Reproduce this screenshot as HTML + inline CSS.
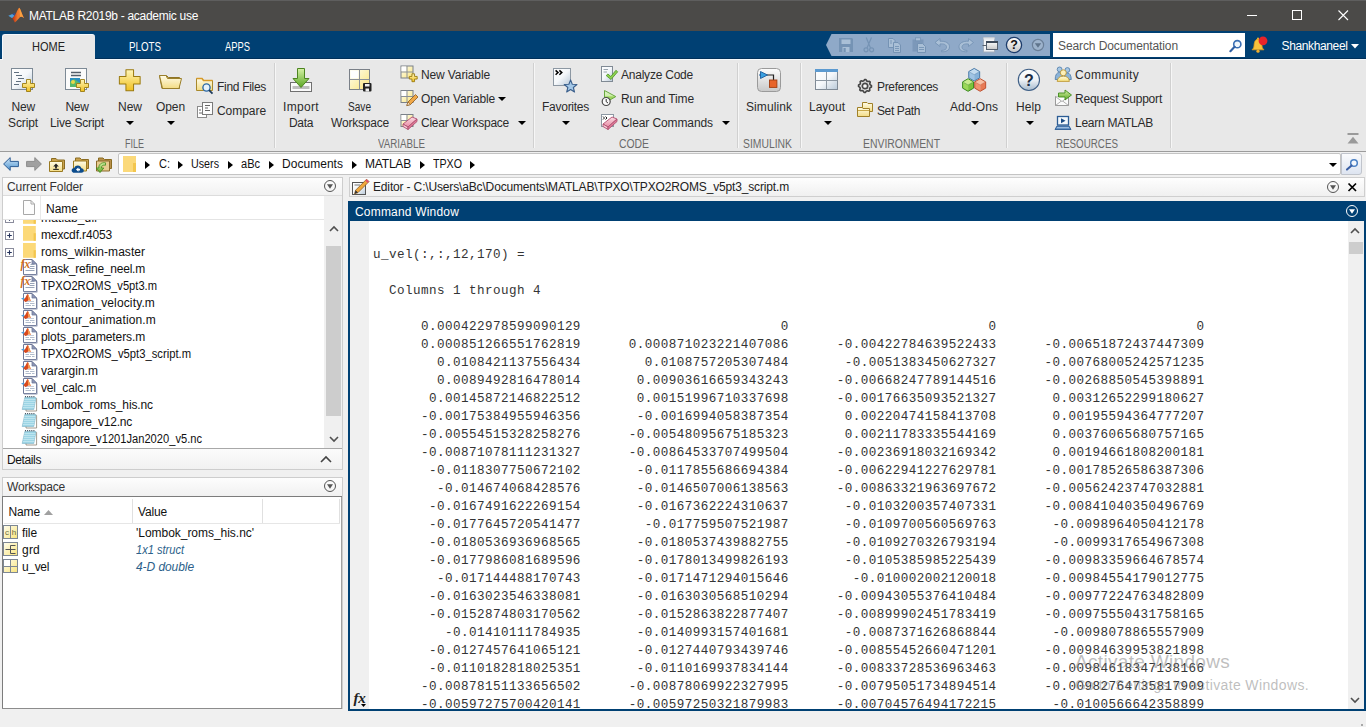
<!DOCTYPE html>
<html><head><meta charset="utf-8"><title>MATLAB R2019b - academic use</title>
<style>
html,body{margin:0;padding:0;}
body{width:1366px;height:727px;position:relative;overflow:hidden;background:#f0f0f0;font-family:"Liberation Sans",sans-serif;}
.b{position:absolute;display:block;}
.t{position:absolute;display:block;white-space:pre;line-height:20px;height:20px;font-size:12px;}
.m{position:absolute;display:block;white-space:pre;font-family:"Liberation Mono",monospace;font-size:12.6px;letter-spacing:0.4375px;line-height:18px;height:18px;color:#343434;}
</style></head><body>
<div class="b" style="left:0px;top:0px;width:1366px;height:31px;background:#4b4a48;"></div>
<div class="b" style="left:0px;top:0px;width:1366px;height:1px;background:#5e5e5e;"></div>
<div class="b" style="left:0px;top:31px;width:1366px;height:28px;background:#004073;"></div>
<div class="b" style="left:0px;top:58px;width:1366px;height:1px;background:#00305a;"></div>
<div class="b" style="left:0px;top:59px;width:1366px;height:92px;background:#e8e8e8;"></div>
<div class="b" style="left:0px;top:59px;width:1366px;height:1px;background:#f4f8fc;"></div>
<div class="b" style="left:0px;top:151px;width:1366px;height:1px;background:#9c9c9c;"></div>
<div class="b" style="left:0px;top:152px;width:1366px;height:25px;background:#f0f0f0;"></div>
<span class="t" style="left:29px;top:6px;color:#ffffff;font-size:12px;letter-spacing:-0.292px;">MATLAB R2019b - academic use</span>
<svg class="b" style="left:1247px;top:10px" width="12" height="12" viewBox="0 0 12 12"><path d="M0 5.5H10" stroke="#fff" stroke-width="1" fill="none"/></svg>
<svg class="b" style="left:1292px;top:10px" width="12" height="12" viewBox="0 0 12 12"><rect x="0.5" y="0.5" width="9" height="9" stroke="#fff" stroke-width="1" fill="none"/></svg>
<svg class="b" style="left:1338px;top:10px" width="12" height="12" viewBox="0 0 12 12"><path d="M0.5 0.5L10 10M10 0.5L0.5 10" stroke="#fff" stroke-width="1.1" fill="none"/></svg>
<div class="b" style="left:2px;top:34px;width:93px;height:26px;background:#e8e8e8;border-radius:3px 3px 0 0;border-top:1px solid #f4f8fc;border-left:1px solid #f4f8fc;box-sizing:border-box;"></div>
<span class="t" style="left:32px;top:37px;color:#222;font-size:12px;transform:scaleX(0.9167);transform-origin:0 50%;">HOME</span>
<span class="t" style="left:129px;top:37px;color:#fff;font-size:12px;transform:scaleX(0.8133);transform-origin:0 50%;">PLOTS</span>
<span class="t" style="left:225px;top:37px;color:#fff;font-size:12px;transform:scaleX(0.7808);transform-origin:0 50%;">APPS</span>
<svg class="b" style="left:826px;top:34px" width="224" height="22" viewBox="0 0 224 22"><path d="M5.5 0H224V22H5.5L0 11Z" fill="#8fa9c8"/></svg>
<div class="b" style="left:1053px;top:33px;width:192px;height:23.6px;background:#ffffff;"></div>
<span class="t" style="left:1058px;top:36px;color:#555;font-size:12px;letter-spacing:-0.103px;">Search Documentation</span>
<span class="t" style="left:1281.5px;top:36px;color:#ffffff;font-size:12px;letter-spacing:-0.369px;">Shankhaneel</span>
<svg class="b" style="left:1351.0px;top:44.25px" width="8" height="4.5" viewBox="0 0 8 4.5"><path d="M0 0H8L4.0 4.5Z" fill="#fff"/></svg>
<div class="b" style="left:274px;top:63px;width:1px;height:85px;background:#d0d0d0;"></div>
<div class="b" style="left:275px;top:63px;width:1px;height:85px;background:#f6f6f6;"></div>
<div class="b" style="left:533px;top:63px;width:1px;height:85px;background:#d0d0d0;"></div>
<div class="b" style="left:534px;top:63px;width:1px;height:85px;background:#f6f6f6;"></div>
<div class="b" style="left:737px;top:63px;width:1px;height:85px;background:#d0d0d0;"></div>
<div class="b" style="left:738px;top:63px;width:1px;height:85px;background:#f6f6f6;"></div>
<div class="b" style="left:800px;top:63px;width:1px;height:85px;background:#d0d0d0;"></div>
<div class="b" style="left:801px;top:63px;width:1px;height:85px;background:#f6f6f6;"></div>
<div class="b" style="left:1006px;top:63px;width:1px;height:85px;background:#d0d0d0;"></div>
<div class="b" style="left:1007px;top:63px;width:1px;height:85px;background:#f6f6f6;"></div>
<div class="b" style="left:1170px;top:63px;width:1px;height:85px;background:#d0d0d0;"></div>
<div class="b" style="left:1171px;top:63px;width:1px;height:85px;background:#f6f6f6;"></div>
<svg class="b" width="0" height="0" style="left:0;top:0"><defs>
<linearGradient id="gY" x1="0" y1="0" x2="0" y2="1"><stop offset="0" stop-color="#fff6b8"/><stop offset="1" stop-color="#f0c020"/></linearGradient>
<linearGradient id="gYl" x1="0" y1="0" x2="0" y2="1"><stop offset="0" stop-color="#fffbe0"/><stop offset="1" stop-color="#f7e07a"/></linearGradient>
<linearGradient id="gYd" x1="0" y1="0" x2="1" y2="1"><stop offset="0" stop-color="#fffef2"/><stop offset="1" stop-color="#f9e47c"/></linearGradient>
<linearGradient id="gPg" x1="0" y1="0" x2="1" y2="1"><stop offset="0" stop-color="#ffffff"/><stop offset="0.5" stop-color="#f4f7fa"/><stop offset="1" stop-color="#b9c9d8"/></linearGradient>
<linearGradient id="gGr" x1="0" y1="0" x2="0" y2="1"><stop offset="0" stop-color="#d6f2a6"/><stop offset="1" stop-color="#5aa622"/></linearGradient>
<linearGradient id="gRt" x1="0" y1="0" x2="0" y2="1"><stop offset="0" stop-color="#e0f4cc"/><stop offset="0.45" stop-color="#cdeea8"/><stop offset="0.5" stop-color="#98d458"/><stop offset="1" stop-color="#b4e080"/></linearGradient>
<linearGradient id="gBl" x1="0" y1="0" x2="0" y2="1"><stop offset="0" stop-color="#cfe6f8"/><stop offset="1" stop-color="#4f94cf"/></linearGradient>
<linearGradient id="gGy" x1="0" y1="0" x2="0" y2="1"><stop offset="0" stop-color="#fdfdfd"/><stop offset="1" stop-color="#c8c8c8"/></linearGradient>
<linearGradient id="gPk" x1="0" y1="0" x2="0" y2="1"><stop offset="0" stop-color="#fbdce4"/><stop offset="1" stop-color="#e88aa4"/></linearGradient>
<linearGradient id="gHp" x1="0" y1="0" x2="0" y2="1"><stop offset="0" stop-color="#ffffff"/><stop offset="0.5" stop-color="#eef2f6"/><stop offset="1" stop-color="#a4b8cc"/></linearGradient>
<linearGradient id="gFo" x1="0" y1="0" x2="0" y2="1"><stop offset="0" stop-color="#fffce8"/><stop offset="1" stop-color="#f3dc84"/></linearGradient>
<linearGradient id="gLogo" x1="0" y1="0" x2="1" y2="0"><stop offset="0" stop-color="#b5260f"/><stop offset="0.5" stop-color="#f08030"/><stop offset="1" stop-color="#d84a18"/></linearGradient>
</defs></svg>
<svg class="b" style="left:10px;top:67px" width="26" height="26" viewBox="0 0 26 26"><rect x="1.5" y="1.5" width="21" height="21" fill="url(#gPg)" stroke="#7d8a96"/><path d="M4 5.5H9M6 8.5H12M8 11.5H14M6 14.5H11M4 17.5H9" stroke="#5f6f7f" stroke-width="1"/><path transform="translate(12 12) scale(1.0)" d="M4.5 0.5H8.5V4.5H12.5V8.5H8.5V12.5H4.5V8.5H0.5V4.5H4.5Z" fill="url(#gY)" stroke="#9a7a10" stroke-width="0.90" stroke-linejoin="round"/></svg>
<svg class="b" style="left:64px;top:67px" width="26" height="26" viewBox="0 0 26 26"><rect x="1.5" y="1.5" width="21" height="21" fill="#fbfbfb" stroke="#7d8a96"/><path d="M7 5.5H17M7 8.5H17" stroke="#555f6a" stroke-width="1.3"/><rect x="6" y="11" width="10" height="9" fill="#2a8fc0"/><path d="M6 20V15L10 12L16 16V20Z" fill="#58b86a"/><circle cx="9" cy="15" r="2" fill="#e8d84a"/><path transform="translate(12 12) scale(1.0)" d="M4.5 0.5H8.5V4.5H12.5V8.5H8.5V12.5H4.5V8.5H0.5V4.5H4.5Z" fill="url(#gY)" stroke="#9a7a10" stroke-width="0.90" stroke-linejoin="round"/></svg>
<svg class="b" style="left:117px;top:68px" width="26" height="24" viewBox="0 0 26 24"><path transform="translate(1.5 1) scale(1.7307692307692308)" d="M4.3 0.5H8.7V4.3H12.5V8.7H8.7V12.5H4.3V8.7H0.5V4.3H4.3Z" fill="url(#gY)" stroke="#9a7a10" stroke-width="0.58" stroke-linejoin="round"/></svg>
<svg class="b" style="left:158px;top:72px" width="26" height="20" viewBox="0 0 26 20"><path d="M1.5 3.5H8.5L10.5 5.5H21.5V16.5H4Z" fill="#d9b95a" stroke="#8f7426" stroke-linejoin="round"/><path d="M1.5 3.5L4.5 16.5H21L23.5 6.5H9.5L8 3.5Z" fill="url(#gFo)" stroke="#9a7f2a" stroke-linejoin="round"/></svg>
<svg class="b" style="left:195px;top:76px" width="22" height="20" viewBox="0 0 22 20"><path d="M1.5 2.5H7L8.5 4.5H17.5V14.5H1.5Z" fill="url(#gFo)" stroke="#a8892c" stroke-linejoin="round"/><path d="M1.5 2.5H7L8.5 4.5H17.5" fill="none" stroke="#d79a28" stroke-width="1.6"/><circle cx="11.5" cy="11.5" r="3.6" fill="#e6f2fb" stroke="#2c6aa8" stroke-width="1.4"/><path d="M14 14.2L17.5 17.6" stroke="#1c3a5c" stroke-width="1.8"/></svg>
<svg class="b" style="left:196px;top:101px" width="20" height="18" viewBox="0 0 20 18"><rect x="1.5" y="5.5" width="9" height="11" fill="#fff" stroke="#8a8a8a"/><rect x="6.5" y="1.5" width="10" height="12" fill="#fcfcfc" stroke="#7a7a7a"/><path d="M9 4.5H14M9 7H12M9 9.5H14M3 9H5M3 12H6" stroke="#666" stroke-width="1"/></svg>
<svg class="b" style="left:289px;top:67px" width="26" height="26" viewBox="0 0 26 26"><rect x="1.5" y="15.5" width="21" height="9" fill="#fafafa" stroke="#707070"/><rect x="3.5" y="19" width="17" height="3" fill="#bdbdbd"/><path d="M8.5 1.5H15.5V11.5H20L12 20.5L4 11.5H8.5Z" fill="url(#gGr)" stroke="#4c8420" stroke-linejoin="round"/></svg>
<svg class="b" style="left:348px;top:68px" width="26" height="26" viewBox="0 0 26 26"><rect x="1.5" y="1.5" width="20" height="20" fill="url(#gYd)" stroke="#7a8088"/><rect x="2.5" y="2.5" width="8" height="8" fill="#fff"/><path d="M11.5 1.5V21.5M1.5 11.5H21.5" stroke="#8a9098" stroke-width="1"/><rect x="15" y="15" width="8.5" height="8.5" rx="1" fill="#222"/><rect x="17" y="16" width="4.5" height="2.5" fill="#eee"/><rect x="17.5" y="20.5" width="3.5" height="3" fill="#eee"/></svg>
<svg class="b" style="left:400px;top:65px" width="20" height="18" viewBox="0 0 20 18"><g transform="translate(0.5 0.5)"><rect x="0.5" y="0.5" width="12" height="12" fill="url(#gYd)" stroke="#7a8088"/><rect x="1" y="1" width="5" height="5" fill="#fff"/><path d="M6.5 0.5V12.5M0.5 6.5H12.5" stroke="#8a9098"/></g><path transform="translate(9 8.5) scale(0.6538461538461539)" d="M4.5 0.5H8.5V4.5H12.5V8.5H8.5V12.5H4.5V8.5H0.5V4.5H4.5Z" fill="url(#gY)" stroke="#9a7a10" stroke-width="1.38" stroke-linejoin="round"/></svg>
<svg class="b" style="left:400px;top:89px" width="20" height="18" viewBox="0 0 20 18"><g transform="translate(0.5 1)"><rect x="0.5" y="0.5" width="12" height="12" fill="url(#gYd)" stroke="#7a8088"/><rect x="1" y="1" width="5" height="5" fill="#fff"/><path d="M6.5 0.5V12.5M0.5 6.5H12.5" stroke="#8a9098"/></g><path d="M15.5 5.5L18 8L10.5 15.5L6.8 16.6L8 13Z" fill="#f0a848" stroke="#8a5a20" stroke-width="0.8" stroke-linejoin="round"/><path d="M6.8 16.6L8 13L10.5 15.5Z" fill="#f6e0c0" stroke="#8a5a20" stroke-width="0.6"/></svg>
<svg class="b" style="left:400px;top:113px" width="20" height="18" viewBox="0 0 20 18"><g transform="translate(0.5 1)"><rect x="0.5" y="0.5" width="12" height="12" fill="url(#gYd)" stroke="#7a8088"/><rect x="1" y="1" width="5" height="5" fill="#fff"/><path d="M6.5 0.5V12.5M0.5 6.5H12.5" stroke="#8a9098"/></g><g transform="translate(2.5 3.5)"><path d="M0.5 7.5L9.5 0.5L14.5 2.5L5.5 10.5Z" fill="url(#gPk)" stroke="#b05070" stroke-width="0.9" stroke-linejoin="round"/><path d="M0.5 7.5L5.5 10.5V13L0.5 10Z" fill="#f7c8d4" stroke="#b05070" stroke-width="0.9" stroke-linejoin="round"/><path d="M5.5 10.5L14.5 2.5V5L5.5 13Z" fill="#e07a98" stroke="#b05070" stroke-width="0.9" stroke-linejoin="round"/></g></svg>
<svg class="b" style="left:552px;top:67px" width="28" height="28" viewBox="0 0 28 28"><rect x="1.5" y="1.5" width="17" height="17" fill="url(#gPg)" stroke="#8d98a3"/><path d="M3.6 3.4L6 5.6L3.6 7.8M7.4 3.4L9.8 5.6L7.4 7.8" fill="none" stroke="#000" stroke-width="1.5"/><path d="M18.60 12.90L20.30 17.25L24.97 17.53L21.36 20.50L22.54 25.02L18.60 22.50L14.66 25.02L15.84 20.50L12.23 17.53L16.90 17.25Z" fill="#a4c8e8" stroke="#3a5f8c" stroke-width="1.1" stroke-linejoin="round"/></svg>
<svg class="b" style="left:600px;top:65px" width="20" height="18" viewBox="0 0 20 18"><rect x="1.5" y="1.5" width="11" height="15" fill="url(#gPg)" stroke="#808a94"/><path d="M3.5 4.5H8M3.5 7H7" stroke="#9aa4ae" stroke-width="1"/><path d="M6.2 10.6L7.9 9L10.8 11.5L15.9 5.3L17.7 6.8L11 14.5Z" fill="#8ed04e" stroke="#4a9424" stroke-width="0.8" stroke-linejoin="round"/></svg>
<svg class="b" style="left:600px;top:88px" width="20" height="20" viewBox="0 0 20 20"><path d="M4.5 2.5L15.8 8.6L4.5 15Z" fill="url(#gRt)" stroke="#6aa840" stroke-linejoin="round"/><circle cx="6.2" cy="13.5" r="4" fill="#fafafa" stroke="#484848" stroke-width="1.2"/><path d="M6.2 11V13.7L8 15" fill="none" stroke="#333" stroke-width="1"/></svg>
<svg class="b" style="left:600px;top:113px" width="20" height="18" viewBox="0 0 20 18"><rect x="1.5" y="1.5" width="12" height="12" fill="#fff" stroke="#8d98a3"/><path d="M3 3.5L4.5 5L3 6.5M5.5 3.5L7 5L5.5 6.5" fill="none" stroke="#000" stroke-width="0.9"/><g transform="translate(2.5 3.5)"><path d="M0.5 7.5L9.5 0.5L14.5 2.5L5.5 10.5Z" fill="url(#gPk)" stroke="#b05070" stroke-width="0.9" stroke-linejoin="round"/><path d="M0.5 7.5L5.5 10.5V13L0.5 10Z" fill="#f7c8d4" stroke="#b05070" stroke-width="0.9" stroke-linejoin="round"/><path d="M5.5 10.5L14.5 2.5V5L5.5 13Z" fill="#e07a98" stroke="#b05070" stroke-width="0.9" stroke-linejoin="round"/></g></svg>
<svg class="b" style="left:756px;top:67px" width="26" height="26" viewBox="0 0 26 26"><rect x="1.5" y="1.5" width="23" height="23" rx="4" fill="url(#gGy)" stroke="#9a9a9a"/><path d="M11 8H17.5V13" fill="none" stroke="#222" stroke-width="1.2"/><path d="M4.5 4.5L11.5 8L4.5 11.5Z" fill="#3aa0e0" stroke="#1c5c9c" stroke-width="0.9" stroke-linejoin="round"/><rect x="13.5" y="13" width="7.4" height="7.4" fill="#e8642a" stroke="#a03c10" stroke-width="0.9"/><path d="M3 8H4.5" stroke="#1c5c9c" stroke-width="1"/></svg>
<svg class="b" style="left:814px;top:68px" width="26" height="24" viewBox="0 0 26 24"><rect x="1.5" y="1.5" width="22" height="20" fill="url(#gPg)" stroke="#7f8a95"/><rect x="1" y="1" width="23" height="3" fill="#5c9ad0"/><path d="M12.5 4V21.5M1.5 12.5H23.5" stroke="#8d98a3" stroke-width="1"/></svg>
<svg class="b" style="left:856px;top:77px" width="18" height="18" viewBox="0 0 18 18"><path d="M15.49 8.68L15.43 9.95L13.99 10.79L13.55 11.72L13.82 13.37L12.87 14.22L11.27 13.79L10.29 14.14L9.32 15.49L8.05 15.43L7.21 13.99L6.28 13.55L4.63 13.82L3.78 12.87L4.21 11.27L3.86 10.29L2.51 9.32L2.57 8.05L4.01 7.21L4.45 6.28L4.18 4.63L5.13 3.78L6.73 4.21L7.71 3.86L8.68 2.51L9.95 2.57L10.79 4.01L11.72 4.45L13.37 4.18L14.22 5.13L13.79 6.73L14.14 7.71Z" fill="#e0e0e0" stroke="#444" stroke-width="1.6" stroke-linejoin="round"/><circle cx="9" cy="9" r="2.7" fill="#fafafa" stroke="#484848" stroke-width="1.7"/></svg>
<svg class="b" style="left:856px;top:101px" width="20" height="18" viewBox="0 0 20 18"><path d="M6.5 1.5H11L12 2.5H16.5V10.5H6.5Z" fill="url(#gFo)" stroke="#a08028" stroke-linejoin="round"/><path d="M1.5 6.5H6L7 7.5H13.5V15.5H1.5Z" fill="url(#gFo)" stroke="#a08028" stroke-linejoin="round"/><path d="M2 9.5H13" stroke="#c8a848" stroke-width="1"/></svg>
<svg class="b" style="left:960px;top:66px" width="28" height="28" viewBox="0 0 28 28"><path d="M14.2 2.3999999999999995L19.66 5.549999999999999L14.2 8.7L8.74 5.549999999999999Z" fill="#c4dcf0"/><path d="M8.74 5.549999999999999L14.2 8.7V15.0L8.74 11.85Z" fill="#a0c4e4"/><path d="M19.66 5.549999999999999L14.2 8.7V15.0L19.66 11.85Z" fill="#86b2da"/><path d="M9.74 6.149999999999999L14.2 8.7L18.66 6.149999999999999" fill="none" stroke="#4a7aa8" stroke-width="0.6" opacity="0.7"/><path d="M14.2 2.3999999999999995L19.66 5.549999999999999V11.85L14.2 15.0L8.74 11.85V5.549999999999999Z" fill="none" stroke="#4a7aa8" stroke-width="1" stroke-linejoin="round"/><path d="M8.1 12.7L13.56 15.85L8.1 19.0L2.64 15.85Z" fill="#c8ec8c"/><path d="M2.64 15.85L8.1 19.0V25.3L2.64 22.15Z" fill="#9cd858"/><path d="M13.56 15.85L8.1 19.0V25.3L13.56 22.15Z" fill="#7cc43c"/><path d="M3.64 16.45L8.1 19.0L12.56 16.45" fill="none" stroke="#3a8a20" stroke-width="0.6" opacity="0.7"/><path d="M8.1 12.7L13.56 15.85V22.15L8.1 25.3L2.64 22.15V15.85Z" fill="none" stroke="#3a8a20" stroke-width="1" stroke-linejoin="round"/><path d="M20.2 12.7L25.66 15.85L20.2 19.0L14.74 15.85Z" fill="#f8c0a4"/><path d="M14.74 15.85L20.2 19.0V25.3L14.74 22.15Z" fill="#f09470"/><path d="M25.66 15.85L20.2 19.0V25.3L25.66 22.15Z" fill="#e87a54"/><path d="M15.74 16.45L20.2 19.0L24.66 16.45" fill="none" stroke="#c05030" stroke-width="0.6" opacity="0.7"/><path d="M20.2 12.7L25.66 15.85V22.15L20.2 25.3L14.74 22.15V15.85Z" fill="none" stroke="#c05030" stroke-width="1" stroke-linejoin="round"/></svg>
<svg class="b" style="left:1016px;top:67px" width="26" height="26" viewBox="0 0 26 26"><circle cx="12.9" cy="12.9" r="10.6" fill="url(#gHp)" stroke="#3f5f86" stroke-width="1.1"/><text x="12.9" y="18.6" text-anchor="middle" font-family="Liberation Sans,sans-serif" font-weight="bold" font-size="16" fill="#1c2c44">?</text></svg>
<svg class="b" style="left:1054px;top:66px" width="20" height="18" viewBox="0 0 20 18"><circle cx="5.6" cy="3.4" r="2.4" fill="#a8c8e4" stroke="#4a78a8" stroke-width="0.8"/><circle cx="13.4" cy="4" r="2.4" fill="#a8c8e4" stroke="#4a78a8" stroke-width="0.8"/><path d="M1.2 13.5Q1.2 6.4 5.6 6.4Q8 6.4 8.6 9V13.5Z" fill="#8cb4d8" stroke="#4a78a8" stroke-width="0.8"/><path d="M10 13.5Q10.5 7 13.4 7Q17 7 17.3 13.5Z" fill="#8cb4d8" stroke="#4a78a8" stroke-width="0.8"/><circle cx="9.3" cy="6.8" r="3" fill="#fdf0b8" stroke="#b8902c" stroke-width="0.8"/><path d="M3.2 15.4Q3.6 10.2 9.3 10.2Q15 10.2 15.4 15.4Z" fill="url(#gYl)" stroke="#b8902c" stroke-width="0.8"/></svg>
<svg class="b" style="left:1054px;top:89px" width="20" height="20" viewBox="0 0 20 20"><rect x="1.5" y="7.5" width="13" height="9" fill="#fbfbfb" stroke="#9a9a9a"/><path d="M1.5 16.5L8 11.5L14.5 16.5" fill="none" stroke="#b0b0b0"/><path d="M1.5 7.5L8 12.5L14.5 7.5" fill="#fff" stroke="#b0b0b0"/><path d="M4.5 4H11V1L17.5 6L11 11V8H4.5Z" fill="url(#gGr)" stroke="#3f8a1c" stroke-width="0.9" stroke-linejoin="round"/></svg>
<svg class="b" style="left:1054px;top:115px" width="20" height="16" viewBox="0 0 20 16"><rect x="3.5" y="1.5" width="11" height="8.5" fill="#f4f8fc" stroke="#2c5c94" stroke-width="1.3"/><path d="M7 3.3L11.5 5.8L7 8.3Z" fill="#1c4c84"/><path d="M3 11L1 14.5H17L15 11Z" fill="#5c8cc0" stroke="#2c5c94" stroke-width="0.9" stroke-linejoin="round"/><path d="M3 12.7H15" stroke="#cfe0f0" stroke-width="0.7"/></svg>
<span class="t" style="left:11.5px;top:97px;color:#2b2b2b;font-size:12px;letter-spacing:-0.169px;">New</span>
<span class="t" style="left:8px;top:113px;color:#2b2b2b;font-size:12px;letter-spacing:-0.112px;">Script</span>
<span class="t" style="left:65.5px;top:97px;color:#2b2b2b;font-size:12px;letter-spacing:-0.335px;">New</span>
<span class="t" style="left:50px;top:113px;color:#2b2b2b;font-size:12px;letter-spacing:-0.184px;">Live Script</span>
<span class="t" style="left:118px;top:97px;color:#2b2b2b;font-size:12px;letter-spacing:-0.002px;">New</span>
<svg class="b" style="left:126.0px;top:120.6px" width="8" height="4" viewBox="0 0 8 4"><path d="M0 0H8L4.0 4Z" fill="#000"/></svg>
<span class="t" style="left:156px;top:97px;color:#2b2b2b;font-size:12px;letter-spacing:-0.088px;">Open</span>
<svg class="b" style="left:166.5px;top:120.6px" width="8" height="4" viewBox="0 0 8 4"><path d="M0 0H8L4.0 4Z" fill="#000"/></svg>
<span class="t" style="left:217px;top:77px;color:#2b2b2b;font-size:12px;letter-spacing:-0.301px;">Find Files</span>
<span class="t" style="left:217px;top:101px;color:#2b2b2b;font-size:12px;letter-spacing:-0.050px;">Compare</span>
<span class="t" style="left:125px;top:133.6px;color:#6a6a6a;font-size:12px;transform:scaleX(0.7498);transform-origin:0 50%;">FILE</span>
<span class="t" style="left:283px;top:97px;color:#2b2b2b;font-size:12px;letter-spacing:0.332px;">Import</span>
<span class="t" style="left:289px;top:113px;color:#2b2b2b;font-size:12px;letter-spacing:-0.337px;">Data</span>
<span class="t" style="left:348px;top:97px;color:#2b2b2b;font-size:12px;transform:scaleX(0.8409);transform-origin:0 50%;">Save</span>
<span class="t" style="left:331px;top:113px;color:#2b2b2b;font-size:12px;letter-spacing:-0.200px;">Workspace</span>
<span class="t" style="left:421px;top:65px;color:#2b2b2b;font-size:12px;letter-spacing:-0.123px;">New Variable</span>
<span class="t" style="left:421px;top:89px;color:#2b2b2b;font-size:12px;letter-spacing:-0.140px;">Open Variable</span>
<svg class="b" style="left:497.5px;top:96.6px" width="8" height="4" viewBox="0 0 8 4"><path d="M0 0H8L4.0 4Z" fill="#000"/></svg>
<span class="t" style="left:421px;top:113px;color:#2b2b2b;font-size:12px;letter-spacing:-0.254px;">Clear Workspace</span>
<svg class="b" style="left:517.5px;top:120.6px" width="8" height="4" viewBox="0 0 8 4"><path d="M0 0H8L4.0 4Z" fill="#000"/></svg>
<span class="t" style="left:378px;top:133.6px;color:#6a6a6a;font-size:12px;transform:scaleX(0.8131);transform-origin:0 50%;">VARIABLE</span>
<span class="t" style="left:542px;top:97px;color:#2b2b2b;font-size:12px;letter-spacing:-0.260px;">Favorites</span>
<svg class="b" style="left:561.5px;top:120.6px" width="8" height="4" viewBox="0 0 8 4"><path d="M0 0H8L4.0 4Z" fill="#000"/></svg>
<span class="t" style="left:621px;top:65px;color:#2b2b2b;font-size:12px;letter-spacing:-0.226px;">Analyze Code</span>
<span class="t" style="left:621px;top:89px;color:#2b2b2b;font-size:12px;letter-spacing:-0.142px;">Run and Time</span>
<span class="t" style="left:621px;top:113px;color:#2b2b2b;font-size:12px;letter-spacing:-0.097px;">Clear Commands</span>
<svg class="b" style="left:721.5px;top:120.6px" width="8" height="4" viewBox="0 0 8 4"><path d="M0 0H8L4.0 4Z" fill="#000"/></svg>
<span class="t" style="left:619px;top:133.6px;color:#6a6a6a;font-size:12px;transform:scaleX(0.8653);transform-origin:0 50%;">CODE</span>
<span class="t" style="left:746px;top:97px;color:#2b2b2b;font-size:12px;letter-spacing:0.082px;">Simulink</span>
<span class="t" style="left:743px;top:133.6px;color:#6a6a6a;font-size:12px;transform:scaleX(0.8645);transform-origin:0 50%;">SIMULINK</span>
<span class="t" style="left:809px;top:97px;color:#2b2b2b;font-size:12px;letter-spacing:-0.004px;">Layout</span>
<svg class="b" style="left:823.5px;top:120.6px" width="8" height="4" viewBox="0 0 8 4"><path d="M0 0H8L4.0 4Z" fill="#000"/></svg>
<span class="t" style="left:877px;top:77px;color:#2b2b2b;font-size:12px;letter-spacing:-0.336px;">Preferences</span>
<span class="t" style="left:877px;top:101px;color:#2b2b2b;font-size:12px;letter-spacing:-0.379px;">Set Path</span>
<span class="t" style="left:863px;top:133.6px;color:#6a6a6a;font-size:12px;transform:scaleX(0.8684);transform-origin:0 50%;">ENVIRONMENT</span>
<span class="t" style="left:950px;top:97px;color:#2b2b2b;font-size:12px;letter-spacing:0.092px;">Add-Ons</span>
<svg class="b" style="left:970.5px;top:120.6px" width="8" height="4" viewBox="0 0 8 4"><path d="M0 0H8L4.0 4Z" fill="#000"/></svg>
<span class="t" style="left:1016px;top:97px;color:#2b2b2b;font-size:12px;letter-spacing:0.080px;">Help</span>
<svg class="b" style="left:1025.5px;top:120.6px" width="8" height="4" viewBox="0 0 8 4"><path d="M0 0H8L4.0 4Z" fill="#000"/></svg>
<span class="t" style="left:1075px;top:65px;color:#2b2b2b;font-size:12px;letter-spacing:0.369px;">Community</span>
<span class="t" style="left:1075px;top:89px;color:#2b2b2b;font-size:12px;letter-spacing:-0.203px;">Request Support</span>
<span class="t" style="left:1075px;top:113px;color:#2b2b2b;font-size:12px;letter-spacing:-0.262px;">Learn MATLAB</span>
<span class="t" style="left:1056px;top:133.6px;color:#6a6a6a;font-size:12px;transform:scaleX(0.8156);transform-origin:0 50%;">RESOURCES</span>
<svg class="b" style="left:1347px;top:133px" width="12" height="11" viewBox="0 0 12 11"><path d="M0.5 1H11.5" stroke="#9a9a9a" stroke-width="2"/><path d="M0.5 10.5H11.5L6 3.8Z" fill="#9a9a9a"/></svg>
<div class="b" style="left:118px;top:153px;width:1223px;height:22px;background:#ffffff;border:1px solid #c4c4c4;box-sizing:border-box;border-radius:2px;"></div>
<div class="b" style="left:1341px;top:153px;width:21px;height:22px;background:linear-gradient(#fafbfd,#dde4f0);border:1px solid #c0c4cc;box-sizing:border-box;border-radius:0 3px 3px 0;"></div>
<div class="b" style="left:123px;top:156px;width:13px;height:16px;background:#fbd97a;"></div>
<div class="b" style="left:133px;top:163px;width:3px;height:9px;background:#f3c64e;"></div>
<svg class="b" style="left:145.0px;top:160.5px" width="5" height="8" viewBox="0 0 5 8"><path d="M0 0V8L5 4.0Z" fill="#000"/></svg>
<svg class="b" style="left:178.0px;top:160.5px" width="5" height="8" viewBox="0 0 5 8"><path d="M0 0V8L5 4.0Z" fill="#000"/></svg>
<svg class="b" style="left:228.0px;top:160.5px" width="5" height="8" viewBox="0 0 5 8"><path d="M0 0V8L5 4.0Z" fill="#000"/></svg>
<svg class="b" style="left:269.0px;top:160.5px" width="5" height="8" viewBox="0 0 5 8"><path d="M0 0V8L5 4.0Z" fill="#000"/></svg>
<svg class="b" style="left:352.0px;top:160.5px" width="5" height="8" viewBox="0 0 5 8"><path d="M0 0V8L5 4.0Z" fill="#000"/></svg>
<svg class="b" style="left:420.0px;top:160.5px" width="5" height="8" viewBox="0 0 5 8"><path d="M0 0V8L5 4.0Z" fill="#000"/></svg>
<svg class="b" style="left:470.0px;top:160.5px" width="5" height="8" viewBox="0 0 5 8"><path d="M0 0V8L5 4.0Z" fill="#000"/></svg>
<span class="t" style="left:159px;top:154px;color:#111;font-size:12px;transform:scaleX(0.9167);transform-origin:0 50%;">C:</span>
<span class="t" style="left:191px;top:154px;color:#111;font-size:12px;transform:scaleX(0.8936);transform-origin:0 50%;">Users</span>
<span class="t" style="left:241px;top:154px;color:#111;font-size:12px;transform:scaleX(0.9189);transform-origin:0 50%;">aBc</span>
<span class="t" style="left:282px;top:154px;color:#111;font-size:12px;letter-spacing:0.035px;">Documents</span>
<span class="t" style="left:365px;top:154px;color:#111;font-size:12px;letter-spacing:-0.187px;">MATLAB</span>
<span class="t" style="left:433px;top:154px;color:#111;font-size:12px;transform:scaleX(0.8876);transform-origin:0 50%;">TPXO</span>
<svg class="b" style="left:1329.0px;top:162.5px" width="8" height="4" viewBox="0 0 8 4"><path d="M0 0H8L4.0 4Z" fill="#000"/></svg>
<div class="b" style="left:2px;top:177px;width:341px;height:272px;background:#ffffff;border:1px solid #cdcdcd;box-sizing:border-box;"></div>
<div class="b" style="left:3px;top:178px;width:339px;height:18px;background:linear-gradient(#fdfdfd,#f1f1f1);"></div>
<div class="b" style="left:3px;top:195px;width:339px;height:1px;background:#dcdcdc;"></div>
<span class="t" style="left:7px;top:177px;color:#333;font-size:12px;letter-spacing:-0.097px;">Current Folder</span>
<div class="b" style="left:3px;top:196px;width:321px;height:23px;background:#ffffff;"></div>
<div class="b" style="left:3px;top:219px;width:321px;height:1px;background:#e4e4e4;"></div>
<div class="b" style="left:40px;top:196px;width:1px;height:23px;background:#e9e9e9;"></div>
<svg class="b" style="left:22px;top:200px" width="14" height="16" viewBox="0 0 14 16"><path d="M1.5 0.5H9L12.5 4V14.5H1.5Z" fill="#fdfdfd" stroke="#a8a8a8"/><path d="M9 0.5V4H12.5" fill="none" stroke="#a8a8a8"/></svg>
<span class="t" style="left:46px;top:199px;color:#111;font-size:12px;letter-spacing:-0.002px;">Name</span>
<div class="b" style="left:324px;top:196px;width:18px;height:252px;background:#f0f0f0;"></div>
<div class="b" style="left:3px;top:448px;width:339px;height:1px;background:#a8a8a8;"></div>
<div class="b" style="left:326px;top:246px;width:15px;height:170px;background:#cdcdcd;"></div>
<div class="b" style="left:3px;top:220px;width:321px;height:229px;overflow:hidden;">
<span class="t" style="left:38px;top:-12px;color:#111;font-size:12px;letter-spacing:0.131px;">matlab_dll</span>
<svg class="b" style="left:17px;top:-12px" width="18" height="17" viewBox="0 0 18 17"><path d="M3 1H15.8V15.8H3Z" fill="#fcd978"/><path d="M13.6 8.2H15.8V15.8H13.6Z" fill="#f3c64e"/></svg>
<svg class="b" style="left:2px;top:-6px" width="9" height="9" viewBox="0 0 9 9"><rect x="0.5" y="0.5" width="8" height="8" fill="#fff" stroke="#8a8c9c"/><path d="M2.2 4.5H6.8M4.5 2.2V6.8" stroke="#22305a" stroke-width="1.1"/></svg>
<span class="t" style="left:38px;top:5px;color:#111;font-size:12px;letter-spacing:-0.141px;">mexcdf.r4053</span>
<svg class="b" style="left:17px;top:5px" width="18" height="17" viewBox="0 0 18 17"><path d="M3 1H15.8V15.8H3Z" fill="#fcd978"/><path d="M13.6 8.2H15.8V15.8H13.6Z" fill="#f3c64e"/></svg>
<svg class="b" style="left:2px;top:11px" width="9" height="9" viewBox="0 0 9 9"><rect x="0.5" y="0.5" width="8" height="8" fill="#fff" stroke="#8a8c9c"/><path d="M2.2 4.5H6.8M4.5 2.2V6.8" stroke="#22305a" stroke-width="1.1"/></svg>
<span class="t" style="left:38px;top:22px;color:#111;font-size:12px;letter-spacing:0.037px;">roms_wilkin-master</span>
<svg class="b" style="left:17px;top:22px" width="18" height="17" viewBox="0 0 18 17"><path d="M3 1H15.8V15.8H3Z" fill="#fcd978"/><path d="M13.6 8.2H15.8V15.8H13.6Z" fill="#f3c64e"/></svg>
<svg class="b" style="left:2px;top:28px" width="9" height="9" viewBox="0 0 9 9"><rect x="0.5" y="0.5" width="8" height="8" fill="#fff" stroke="#8a8c9c"/><path d="M2.2 4.5H6.8M4.5 2.2V6.8" stroke="#22305a" stroke-width="1.1"/></svg>
<span class="t" style="left:38px;top:39px;color:#111;font-size:12px;letter-spacing:-0.225px;">mask_refine_neel.m</span>
<svg class="b" style="left:17px;top:39px" width="18" height="17" viewBox="0 0 18 17"><path d="M3.5 0.5H12L16.5 5V15.5H3.5Z" fill="#fff" stroke="#6e7898" stroke-linejoin="round"/><path d="M12 0.5V5H16.5Z" fill="#8c96b8" stroke="#6e7898" stroke-width="0.8" stroke-linejoin="round"/><path d="M4 16.2H17.2V5.5" fill="none" stroke="#9aa2ba" stroke-width="0.8"/><path d="M9.5 3.5H11M10.5 5.5H14.5M10 7.5H14.5M9.5 9.5H14.5M5.5 11.5H14.5" stroke="#8c9ab0" stroke-width="0.9"/><text x="0.6" y="9.4" font-family="Liberation Serif,serif" font-style="italic" font-weight="bold" font-size="11.5" fill="#d0701c">fx</text></svg>
<span class="t" style="left:38px;top:56px;color:#111;font-size:12px;transform:scaleX(0.9302);transform-origin:0 50%;">TPXO2ROMS_v5pt3.m</span>
<svg class="b" style="left:17px;top:56px" width="18" height="17" viewBox="0 0 18 17"><path d="M3.5 0.5H12L16.5 5V15.5H3.5Z" fill="#fff" stroke="#6e7898" stroke-linejoin="round"/><path d="M12 0.5V5H16.5Z" fill="#8c96b8" stroke="#6e7898" stroke-width="0.8" stroke-linejoin="round"/><path d="M4 16.2H17.2V5.5" fill="none" stroke="#9aa2ba" stroke-width="0.8"/><path d="M9.5 3.5H11M10.5 5.5H14.5M10 7.5H14.5M9.5 9.5H14.5M5.5 11.5H14.5" stroke="#8c9ab0" stroke-width="0.9"/><text x="0.6" y="9.4" font-family="Liberation Serif,serif" font-style="italic" font-weight="bold" font-size="11.5" fill="#d0701c">fx</text></svg>
<span class="t" style="left:38px;top:73px;color:#111;font-size:12px;letter-spacing:0.142px;">animation_velocity.m</span>
<svg class="b" style="left:17px;top:73px" width="18" height="17" viewBox="0 0 18 17"><path d="M3.5 0.5H12L16.5 5V15.5H3.5Z" fill="#fff" stroke="#6e7898" stroke-linejoin="round"/><path d="M12 0.5V5H16.5Z" fill="#8c96b8" stroke="#6e7898" stroke-width="0.8" stroke-linejoin="round"/><path d="M4 16.2H17.2V5.5" fill="none" stroke="#9aa2ba" stroke-width="0.8"/><path d="M5.5 10.5H9M10 10.5H14.5M5.5 12.5H11M12 12.5H14.5" stroke="#a8b4c6" stroke-width="0.9"/><path d="M5 8.5H14" stroke="#b8c0d0" stroke-width="0.8"/><path d="M1 5.6L3.6 4.6L4.8 5.6L3.4 7Z" fill="#4f9fdc"/><path d="M3.4 7L4.8 5.6C6 4 6.8 1.4 7.6 1C8.6 1.6 9.6 5.4 11 8C9.8 7.2 9 7 8.2 7.6C7.2 8.4 6.2 8.8 5.2 9C4.6 8.2 4 7.6 3.4 7Z" fill="#d9481c"/><path d="M7.6 1C8.6 1.6 9.6 5.4 11 8C9.8 7.2 9 7 8.2 7.6C8 5.4 7.8 3 7.6 1Z" fill="#f59a50"/></svg>
<span class="t" style="left:38px;top:90px;color:#111;font-size:12px;letter-spacing:0.155px;">contour_animation.m</span>
<svg class="b" style="left:17px;top:90px" width="18" height="17" viewBox="0 0 18 17"><path d="M3.5 0.5H12L16.5 5V15.5H3.5Z" fill="#fff" stroke="#6e7898" stroke-linejoin="round"/><path d="M12 0.5V5H16.5Z" fill="#8c96b8" stroke="#6e7898" stroke-width="0.8" stroke-linejoin="round"/><path d="M4 16.2H17.2V5.5" fill="none" stroke="#9aa2ba" stroke-width="0.8"/><path d="M5.5 10.5H9M10 10.5H14.5M5.5 12.5H11M12 12.5H14.5" stroke="#a8b4c6" stroke-width="0.9"/><path d="M5 8.5H14" stroke="#b8c0d0" stroke-width="0.8"/><path d="M1 5.6L3.6 4.6L4.8 5.6L3.4 7Z" fill="#4f9fdc"/><path d="M3.4 7L4.8 5.6C6 4 6.8 1.4 7.6 1C8.6 1.6 9.6 5.4 11 8C9.8 7.2 9 7 8.2 7.6C7.2 8.4 6.2 8.8 5.2 9C4.6 8.2 4 7.6 3.4 7Z" fill="#d9481c"/><path d="M7.6 1C8.6 1.6 9.6 5.4 11 8C9.8 7.2 9 7 8.2 7.6C8 5.4 7.8 3 7.6 1Z" fill="#f59a50"/></svg>
<span class="t" style="left:38px;top:107px;color:#111;font-size:12px;letter-spacing:-0.113px;">plots_parameters.m</span>
<svg class="b" style="left:17px;top:107px" width="18" height="17" viewBox="0 0 18 17"><path d="M3.5 0.5H12L16.5 5V15.5H3.5Z" fill="#fff" stroke="#6e7898" stroke-linejoin="round"/><path d="M12 0.5V5H16.5Z" fill="#8c96b8" stroke="#6e7898" stroke-width="0.8" stroke-linejoin="round"/><path d="M4 16.2H17.2V5.5" fill="none" stroke="#9aa2ba" stroke-width="0.8"/><path d="M5.5 10.5H9M10 10.5H14.5M5.5 12.5H11M12 12.5H14.5" stroke="#a8b4c6" stroke-width="0.9"/><path d="M5 8.5H14" stroke="#b8c0d0" stroke-width="0.8"/><path d="M1 5.6L3.6 4.6L4.8 5.6L3.4 7Z" fill="#4f9fdc"/><path d="M3.4 7L4.8 5.6C6 4 6.8 1.4 7.6 1C8.6 1.6 9.6 5.4 11 8C9.8 7.2 9 7 8.2 7.6C7.2 8.4 6.2 8.8 5.2 9C4.6 8.2 4 7.6 3.4 7Z" fill="#d9481c"/><path d="M7.6 1C8.6 1.6 9.6 5.4 11 8C9.8 7.2 9 7 8.2 7.6C8 5.4 7.8 3 7.6 1Z" fill="#f59a50"/></svg>
<span class="t" style="left:38px;top:124px;color:#111;font-size:12px;transform:scaleX(0.9373);transform-origin:0 50%;">TPXO2ROMS_v5pt3_script.m</span>
<svg class="b" style="left:17px;top:124px" width="18" height="17" viewBox="0 0 18 17"><path d="M3.5 0.5H12L16.5 5V15.5H3.5Z" fill="#fff" stroke="#6e7898" stroke-linejoin="round"/><path d="M12 0.5V5H16.5Z" fill="#8c96b8" stroke="#6e7898" stroke-width="0.8" stroke-linejoin="round"/><path d="M4 16.2H17.2V5.5" fill="none" stroke="#9aa2ba" stroke-width="0.8"/><path d="M5.5 10.5H9M10 10.5H14.5M5.5 12.5H11M12 12.5H14.5" stroke="#a8b4c6" stroke-width="0.9"/><path d="M5 8.5H14" stroke="#b8c0d0" stroke-width="0.8"/><path d="M1 5.6L3.6 4.6L4.8 5.6L3.4 7Z" fill="#4f9fdc"/><path d="M3.4 7L4.8 5.6C6 4 6.8 1.4 7.6 1C8.6 1.6 9.6 5.4 11 8C9.8 7.2 9 7 8.2 7.6C7.2 8.4 6.2 8.8 5.2 9C4.6 8.2 4 7.6 3.4 7Z" fill="#d9481c"/><path d="M7.6 1C8.6 1.6 9.6 5.4 11 8C9.8 7.2 9 7 8.2 7.6C8 5.4 7.8 3 7.6 1Z" fill="#f59a50"/></svg>
<span class="t" style="left:38px;top:141px;color:#111;font-size:12px;letter-spacing:0.032px;">varargin.m</span>
<svg class="b" style="left:17px;top:141px" width="18" height="17" viewBox="0 0 18 17"><path d="M3.5 0.5H12L16.5 5V15.5H3.5Z" fill="#fff" stroke="#6e7898" stroke-linejoin="round"/><path d="M12 0.5V5H16.5Z" fill="#8c96b8" stroke="#6e7898" stroke-width="0.8" stroke-linejoin="round"/><path d="M4 16.2H17.2V5.5" fill="none" stroke="#9aa2ba" stroke-width="0.8"/><path d="M5.5 10.5H9M10 10.5H14.5M5.5 12.5H11M12 12.5H14.5" stroke="#a8b4c6" stroke-width="0.9"/><path d="M5 8.5H14" stroke="#b8c0d0" stroke-width="0.8"/><path d="M1 5.6L3.6 4.6L4.8 5.6L3.4 7Z" fill="#4f9fdc"/><path d="M3.4 7L4.8 5.6C6 4 6.8 1.4 7.6 1C8.6 1.6 9.6 5.4 11 8C9.8 7.2 9 7 8.2 7.6C7.2 8.4 6.2 8.8 5.2 9C4.6 8.2 4 7.6 3.4 7Z" fill="#d9481c"/><path d="M7.6 1C8.6 1.6 9.6 5.4 11 8C9.8 7.2 9 7 8.2 7.6C8 5.4 7.8 3 7.6 1Z" fill="#f59a50"/></svg>
<span class="t" style="left:38px;top:158px;color:#111;font-size:12px;letter-spacing:-0.168px;">vel_calc.m</span>
<svg class="b" style="left:17px;top:158px" width="18" height="17" viewBox="0 0 18 17"><path d="M3.5 0.5H12L16.5 5V15.5H3.5Z" fill="#fff" stroke="#6e7898" stroke-linejoin="round"/><path d="M12 0.5V5H16.5Z" fill="#8c96b8" stroke="#6e7898" stroke-width="0.8" stroke-linejoin="round"/><path d="M4 16.2H17.2V5.5" fill="none" stroke="#9aa2ba" stroke-width="0.8"/><path d="M5.5 10.5H9M10 10.5H14.5M5.5 12.5H11M12 12.5H14.5" stroke="#a8b4c6" stroke-width="0.9"/><path d="M5 8.5H14" stroke="#b8c0d0" stroke-width="0.8"/><path d="M1 5.6L3.6 4.6L4.8 5.6L3.4 7Z" fill="#4f9fdc"/><path d="M3.4 7L4.8 5.6C6 4 6.8 1.4 7.6 1C8.6 1.6 9.6 5.4 11 8C9.8 7.2 9 7 8.2 7.6C7.2 8.4 6.2 8.8 5.2 9C4.6 8.2 4 7.6 3.4 7Z" fill="#d9481c"/><path d="M7.6 1C8.6 1.6 9.6 5.4 11 8C9.8 7.2 9 7 8.2 7.6C8 5.4 7.8 3 7.6 1Z" fill="#f59a50"/></svg>
<span class="t" style="left:38px;top:175px;color:#111;font-size:12px;letter-spacing:-0.114px;">Lombok_roms_his.nc</span>
<svg class="b" style="left:17px;top:175px" width="18" height="17" viewBox="0 0 18 17"><path d="M6 3.5H16.6V16H6Z" fill="#fff" stroke="#8a8272" stroke-width="0.8"/><path d="M4.8 2.5H16L13.8 14.5H2.2Z" fill="#9ad4e4" stroke="#7fb4c8" stroke-width="0.6"/><path d="M4.4 4.6H15.4M4 6.6H15M3.7 8.6H14.7M3.3 10.6H14.3M3 12.6H14" stroke="#c4e8f2" stroke-width="0.9"/><path d="M5.5 2.2V1M7.6 2.2V1M9.7 2.2V1M11.8 2.2V1M13.9 2.2V1" stroke="#4a5a66" stroke-width="1.1"/></svg>
<span class="t" style="left:38px;top:192px;color:#111;font-size:12px;letter-spacing:-0.233px;">singapore_v12.nc</span>
<svg class="b" style="left:17px;top:192px" width="18" height="17" viewBox="0 0 18 17"><path d="M6 3.5H16.6V16H6Z" fill="#fff" stroke="#8a8272" stroke-width="0.8"/><path d="M4.8 2.5H16L13.8 14.5H2.2Z" fill="#9ad4e4" stroke="#7fb4c8" stroke-width="0.6"/><path d="M4.4 4.6H15.4M4 6.6H15M3.7 8.6H14.7M3.3 10.6H14.3M3 12.6H14" stroke="#c4e8f2" stroke-width="0.9"/><path d="M5.5 2.2V1M7.6 2.2V1M9.7 2.2V1M11.8 2.2V1M13.9 2.2V1" stroke="#4a5a66" stroke-width="1.1"/></svg>
<span class="t" style="left:38px;top:209px;color:#111;font-size:12px;transform:scaleX(0.9282);transform-origin:0 50%;">singapore_v1201Jan2020_v5.nc</span>
<svg class="b" style="left:17px;top:209px" width="18" height="17" viewBox="0 0 18 17"><path d="M6 3.5H16.6V16H6Z" fill="#fff" stroke="#8a8272" stroke-width="0.8"/><path d="M4.8 2.5H16L13.8 14.5H2.2Z" fill="#9ad4e4" stroke="#7fb4c8" stroke-width="0.6"/><path d="M4.4 4.6H15.4M4 6.6H15M3.7 8.6H14.7M3.3 10.6H14.3M3 12.6H14" stroke="#c4e8f2" stroke-width="0.9"/><path d="M5.5 2.2V1M7.6 2.2V1M9.7 2.2V1M11.8 2.2V1M13.9 2.2V1" stroke="#4a5a66" stroke-width="1.1"/></svg>
</div>
<svg class="b" style="left:329px;top:225px" width="10" height="7" viewBox="0 0 10 7"><path d="M1 6L5 2L9 6" stroke="#505050" stroke-width="1.6" fill="none"/></svg>
<svg class="b" style="left:329px;top:436px" width="10" height="7" viewBox="0 0 10 7"><path d="M1 1L5 5L9 1" stroke="#505050" stroke-width="1.6" fill="none"/></svg>
<div class="b" style="left:2px;top:449px;width:341px;height:21px;background:linear-gradient(#fbfbfb,#f1f1f1);border:1px solid #cdcdcd;border-top:none;box-sizing:border-box;"></div>
<span class="t" style="left:7px;top:450px;color:#111;font-size:12px;letter-spacing:-0.383px;">Details</span>
<svg class="b" style="left:320px;top:455px" width="12" height="8" viewBox="0 0 12 8"><path d="M1 7L6 2L11 7" stroke="#444" stroke-width="1.6" fill="none"/></svg>
<div class="b" style="left:2px;top:477px;width:341px;height:232px;background:#ffffff;border:1px solid #cdcdcd;box-sizing:border-box;"></div>
<div class="b" style="left:3px;top:478px;width:339px;height:18px;background:linear-gradient(#fdfdfd,#f1f1f1);"></div>
<span class="t" style="left:7px;top:477px;color:#333;font-size:12px;letter-spacing:-0.200px;">Workspace</span>
<div class="b" style="left:2px;top:496px;width:340px;height:1px;background:#7c7c7c;"></div>
<div class="b" style="left:2px;top:496px;width:1px;height:212px;background:#7c7c7c;"></div>
<div class="b" style="left:341px;top:497px;width:1px;height:212px;background:#a0a0a0;"></div>
<div class="b" style="left:2px;top:708px;width:340px;height:1px;background:#8c8c8c;"></div>
<div class="b" style="left:4px;top:523px;width:336px;height:1px;background:#e6e6e6;"></div>
<div class="b" style="left:132px;top:499px;width:1px;height:24px;background:#e0e0e0;"></div>
<div class="b" style="left:262px;top:499px;width:1px;height:24px;background:#e0e0e0;"></div>
<div class="b" style="left:339px;top:499px;width:1px;height:24px;background:#e0e0e0;"></div>
<span class="t" style="left:8.5px;top:502px;color:#111;font-size:12px;letter-spacing:-0.127px;">Name</span>
<svg class="b" style="left:44px;top:509.5px" width="9" height="5" viewBox="0 0 9 5"><path d="M0 5L4.5 0L9 5Z" fill="#a0a0a0"/></svg>
<span class="t" style="left:138px;top:502px;color:#111;font-size:12px;letter-spacing:-0.160px;">Value</span>
<span class="t" style="left:22px;top:523px;color:#111;font-size:12px;letter-spacing:-0.085px;">file</span>
<span class="t" style="left:22px;top:540px;color:#111;font-size:12px;letter-spacing:0.219px;">grd</span>
<span class="t" style="left:22px;top:557px;color:#111;font-size:12px;letter-spacing:-0.337px;">u_vel</span>
<span class="t" style="left:136px;top:523px;color:#111;font-size:12px;letter-spacing:-0.031px;">&#x27;Lombok_roms_his.nc&#x27;</span>
<span class="t" style="left:136px;top:540px;color:#2c5f8a;font-size:12px;transform:scaleX(0.9228);transform-origin:0 50%;font-style:italic;">1x1 struct</span>
<span class="t" style="left:136px;top:557px;color:#2c5f8a;font-size:12px;letter-spacing:-0.070px;font-style:italic;">4-D double</span>
<svg class="b" style="left:3px;top:525px" width="16" height="15" viewBox="0 0 16 15"><rect x="0.5" y="0.5" width="14" height="13" fill="url(#gYd)" stroke="#7d8794"/><path d="M7.5 0.5V13.5" stroke="#7d8794"/><text x="4" y="9.6" text-anchor="middle" font-family="Liberation Sans,sans-serif" font-size="8" fill="#6a6a3a">c</text><text x="11" y="9.6" text-anchor="middle" font-family="Liberation Sans,sans-serif" font-size="8" fill="#6a6a3a">h</text></svg>
<svg class="b" style="left:3px;top:542px" width="16" height="15" viewBox="0 0 16 15"><rect x="0.5" y="0.5" width="14" height="13" fill="url(#gYd)" stroke="#7d8794"/><path d="M2.5 7.5H7.5M7.5 3.5V11.5M7.5 3.5H12.5M7.5 7.5H12.5M7.5 11.5H12.5" fill="none" stroke="#555" stroke-width="1"/></svg>
<svg class="b" style="left:3px;top:559px" width="16" height="15" viewBox="0 0 16 15"><rect x="0.5" y="0.5" width="14" height="13" fill="url(#gYd)" stroke="#7d8794"/><rect x="1" y="1" width="6" height="6" fill="#fff"/><path d="M7.5 0.5V13.5M0.5 7.5H14.5" stroke="#7d8794"/></svg>
<div class="b" style="left:349px;top:177px;width:1016px;height:20px;background:linear-gradient(#fefefe,#f0f0f0);border:1px solid #cfcfcf;box-sizing:border-box;"></div>
<span class="t" style="left:373px;top:177px;color:#222;font-size:12px;letter-spacing:-0.155px;">Editor - C:\Users\aBc\Documents\MATLAB\TPXO\TPXO2ROMS_v5pt3_script.m</span>
<div class="b" style="left:348px;top:201px;width:1018px;height:510px;background:#004073;"></div>
<div class="b" style="left:350px;top:221px;width:1014px;height:488px;background:#ffffff;"></div>
<div class="b" style="left:350px;top:221px;width:19px;height:488px;background:#f0f0f0;"></div>
<div class="b" style="left:1348px;top:221px;width:16px;height:488px;background:#f0f0f0;"></div>
<div class="b" style="left:1349px;top:242px;width:14px;height:12px;background:#cdcdcd;"></div>
<span class="t" style="left:355px;top:202px;color:#ffffff;font-size:12px;letter-spacing:0.188px;">Command Window</span>
<svg class="b" style="left:1350px;top:227px" width="10" height="7" viewBox="0 0 10 7"><path d="M1 6L5 2L9 6" stroke="#505050" stroke-width="1.6" fill="none"/></svg>
<svg class="b" style="left:1350px;top:697px" width="10" height="7" viewBox="0 0 10 7"><path d="M1 1L5 5L9 1" stroke="#505050" stroke-width="1.6" fill="none"/></svg>
<div class="b" style="left:369px;top:221px;width:979px;height:488px;overflow:hidden;">
<span class="m" style="left:4px;top:25px">u_vel(:,:,12,170) =</span>
<span class="m" style="left:4px;top:61px">  Columns 1 through 4</span>
<span class="m" style="left:4px;top:97px">      0.000422978599090129                         0                         0                         0</span>
<span class="m" style="left:4px;top:115px">      0.000851266551762819      0.000871023221407086      -0.00422784639522433      -0.00651872437447309</span>
<span class="m" style="left:4px;top:133px">        0.0108421137556434        0.0108757205307484       -0.0051383450627327      -0.00768005242571235</span>
<span class="m" style="left:4px;top:151px">        0.0089492816478014       0.00903616659343243      -0.00668247789144516      -0.00268850545398891</span>
<span class="m" style="left:4px;top:169px">       0.00145872146822512       0.00151996710337698      -0.00176635093521327       0.00312652299180627</span>
<span class="m" style="left:4px;top:187px">      -0.00175384955946356       -0.0016994058387354       0.00220474158413708       0.00195594364777207</span>
<span class="m" style="left:4px;top:205px">      -0.00554515328258276      -0.00548095675185323       0.00211783335544169       0.00376065680757165</span>
<span class="m" style="left:4px;top:223px">      -0.00871078111231327      -0.00864533707499504      -0.00236918032169342       0.00194661808200181</span>
<span class="m" style="left:4px;top:241px">       -0.0118307750672102       -0.0117855686694384      -0.00622941227629781      -0.00178526586387306</span>
<span class="m" style="left:4px;top:259px">        -0.014674068428576       -0.0146507006138563      -0.00863321963697672      -0.00562423747032881</span>
<span class="m" style="left:4px;top:277px">       -0.0167491622269154       -0.0167362224310637       -0.0103200357407331      -0.00841040350496769</span>
<span class="m" style="left:4px;top:295px">       -0.0177645720541477        -0.017759507521987       -0.0109700560569763       -0.0098964050412178</span>
<span class="m" style="left:4px;top:313px">       -0.0180536936968565       -0.0180537439882755       -0.0109270326793194       -0.0099317654967308</span>
<span class="m" style="left:4px;top:331px">       -0.0177986081689596       -0.0178013499826193       -0.0105385985225439      -0.00983359664678574</span>
<span class="m" style="left:4px;top:349px">        -0.017144488170743       -0.0171471294015646        -0.010002002120018      -0.00984554179012775</span>
<span class="m" style="left:4px;top:367px">       -0.0163023546338081       -0.0163030568510294      -0.00943055376410484      -0.00977224763482809</span>
<span class="m" style="left:4px;top:385px">       -0.0152874803170562       -0.0152863822877407      -0.00899902451783419      -0.00975550431758165</span>
<span class="m" style="left:4px;top:403px">         -0.01410111784935       -0.0140993157401681       -0.0087371626868844       -0.0098078865557909</span>
<span class="m" style="left:4px;top:421px">       -0.0127457641065121       -0.0127440793439746      -0.00855452660471201      -0.00984639953821898</span>
<span class="m" style="left:4px;top:439px">       -0.0110182818025351       -0.0110169937834144      -0.00833728536963463      -0.00984618347138166</span>
<span class="m" style="left:4px;top:457px">      -0.00878151133656502      -0.00878069922327995      -0.00795051734894514      -0.00982764735817909</span>
<span class="m" style="left:4px;top:475px">      -0.00597275700420141      -0.00597250321879983      -0.00704576494172215       -0.0100566642358899</span>
</div>
<span class="b" style="left:353.5px;top:690px;font:italic bold 15px 'Liberation Serif',serif;color:#222;line-height:16px;letter-spacing:-0.3px;">fx</span>
<svg class="b" style="left:361.0px;top:703.9px" width="5" height="3" viewBox="0 0 5 3"><path d="M0 0H5L2.5 3Z" fill="#000"/></svg>
<svg class="b" style="left:8px;top:7px" width="17" height="17" viewBox="0 0 17 17"><g transform="translate(0.1 0.5) scale(1.02)"><path d="M0.2 8.2L4.2 6.4L6.4 8.2L4.0 10.6Z" fill="#4f9fdc"/><path d="M4.2 6.4L6.4 8.2L7.6 6.6L6.0 5.4Z" fill="#2a4f9c"/><path d="M4.0 10.6L6.4 8.2C8.2 5.6 9.6 0.8 10.8 0.2C12.0 0.8 13.6 6.6 15.6 10.4C13.8 9.2 12.8 8.6 11.6 9.6C10.2 10.8 8.6 13.4 6.6 14.8C5.8 13.2 5.0 11.6 4.0 10.6Z" fill="url(#gLogo)"/><path d="M10.8 0.2C12.0 0.8 13.6 6.6 15.6 10.4C13.8 9.2 12.8 8.6 11.6 9.6C11.4 6.4 11.0 3 10.8 0.2Z" fill="#f9a040"/></g></svg>
<svg class="b" style="left:838px;top:37px" width="16" height="16" viewBox="0 0 16 16"><path d="M1 1H14L15 2V15H1Z" fill="#7593b4"/><rect x="3.5" y="2.5" width="9" height="4.5" fill="#a9bfd6"/><rect x="4.5" y="10" width="7" height="5" fill="#a9bfd6"/><rect x="5.5" y="11" width="2.2" height="4" fill="#7593b4"/></svg>
<svg class="b" style="left:862px;top:37px" width="14" height="16" viewBox="0 0 14 16"><path d="M9.5 0.5L5 11M4.2 0.5L8.5 11" stroke="#7593b4" stroke-width="1.2" fill="none"/><circle cx="4" cy="12.8" r="2" fill="none" stroke="#7593b4" stroke-width="1.2"/><circle cx="9.6" cy="12.8" r="2" fill="none" stroke="#7593b4" stroke-width="1.2"/></svg>
<svg class="b" style="left:887px;top:37px" width="15" height="16" viewBox="0 0 15 16"><path d="M1.5 1.5H6L8 3.5V10.5H1.5Z" fill="#a9bfd6" stroke="#7593b4"/><path d="M6.5 5.5H11L13.5 8V15.5H6.5Z" fill="#a9bfd6" stroke="#7593b4"/><path d="M8 9.5H12M8 11.5H12M8 13.5H12M3 4H5M3 6H5" stroke="#7593b4" stroke-width="0.9"/></svg>
<svg class="b" style="left:911px;top:37px" width="16" height="16" viewBox="0 0 16 16"><rect x="1.5" y="2.5" width="11" height="12" fill="#7593b4" opacity="0.75"/><rect x="4.5" y="0.8" width="5" height="3" fill="#a9bfd6" stroke="#7593b4" stroke-width="0.8"/><path d="M6.5 6.5H11.5L14.5 9.5V15.5H6.5Z" fill="#a9bfd6" stroke="#7593b4"/><path d="M8 10.5H13M8 12.5H13" stroke="#7593b4" stroke-width="0.9"/></svg>
<svg class="b" style="left:934px;top:37px" width="17" height="16" viewBox="0 0 17 16"><path d="M6 1.5L1 5.5L6 9.5V7C10 6.6 12.5 7.6 12.5 10.2C12.5 12.4 10.5 13.4 7.5 13.4V14.8C12 14.9 15.5 13.4 15.5 9.8C15.5 6 11.5 4 6 4.2Z" fill="#a9bfd6" stroke="#7593b4" stroke-width="0.9" stroke-linejoin="round"/></svg>
<svg class="b" style="left:958px;top:37px" width="17" height="16" viewBox="0 0 17 16"><path transform="translate(16.5 0) scale(-1 1)" d="M6 1.5L1 5.5L6 9.5V7C10 6.6 12.5 7.6 12.5 10.2C12.5 12.4 10.5 13.4 7.5 13.4V14.8C12 14.9 15.5 13.4 15.5 9.8C15.5 6 11.5 4 6 4.2Z" fill="#a9bfd6" stroke="#7593b4" stroke-width="0.9" stroke-linejoin="round"/></svg>
<svg class="b" style="left:981px;top:36px" width="18" height="18" viewBox="0 0 18 18"><rect x="2.5" y="1.5" width="11" height="14.5" fill="#f2f3f5" stroke="#a4aebc"/><rect x="2.5" y="1.5" width="11" height="2" fill="#dfe3e8"/><rect x="5.5" y="5.5" width="11" height="8" fill="url(#gGy)" stroke="#56606e" stroke-width="1"/><rect x="5" y="5" width="12" height="2" fill="#3e4a5a"/><path d="M1.5 9.5H5" stroke="#56606e"/></svg>
<svg class="b" style="left:1005px;top:36px" width="18" height="18" viewBox="0 0 18 18"><circle cx="9" cy="9" r="7.6" fill="url(#gGy)" stroke="#1c3c6c" stroke-width="1.3"/><text x="9" y="13.4" text-anchor="middle" font-family="Liberation Sans,sans-serif" font-weight="bold" font-size="12.5" fill="#111">?</text></svg>
<svg class="b" style="left:1031px;top:38px" width="14" height="14" viewBox="0 0 14 14"><circle cx="7" cy="7" r="5.6" fill="#9db3cc" stroke="#6a7f98" stroke-width="1.2"/><path d="M3.8 5.2H10.2L7 9.8Z" fill="#5f748c"/></svg>
<svg class="b" style="left:1229px;top:39px" width="14" height="14" viewBox="0 0 14 14"><circle cx="8.3" cy="5.2" r="3.6" fill="#eef5fc" stroke="#3a6fb4" stroke-width="1.6"/><path d="M5.6 7.8L1.4 12.2" stroke="#2f5fa4" stroke-width="2.1" stroke-linecap="round"/></svg>
<svg class="b" style="left:1250px;top:36px" width="20" height="18" viewBox="0 0 20 18"><path d="M8 3C4.6 3.6 4.2 7 4 10C3.8 12 3 12.8 2 13.8H14C13 12.8 12.2 12 12 10C11.8 7 11.4 3.6 8 3Z" fill="#f7c23c" stroke="#d9981c" stroke-width="0.8"/><circle cx="8" cy="15.2" r="1.6" fill="#f2b02c"/><circle cx="8" cy="2.6" r="1" fill="#f2b02c"/><circle cx="13" cy="4.8" r="4.4" fill="#e8232a"/></svg>
<svg class="b" style="left:2px;top:156px" width="18" height="16" viewBox="0 0 18 16"><path d="M8.2 1.6L1.6 8L8.2 14.4V10.6H16.4V5.4H8.2Z" fill="url(#gBl)" stroke="#2c5c94" stroke-width="1" stroke-linejoin="round"/></svg>
<svg class="b" style="left:25px;top:156px" width="18" height="16" viewBox="0 0 18 16"><path d="M9.8 1.6L16.4 8L9.8 14.4V10.6H1.6V5.4H9.8Z" fill="#a0a0a0" stroke="#8c8c8c" stroke-width="1" stroke-linejoin="round"/></svg>
<svg class="b" style="left:48px;top:156.5px" width="18" height="16" viewBox="0 0 18 16"><path d="M3.5 1.5H8L9.5 3H16.5V12H3.5Z" fill="#caa24e" stroke="#8a6c22" stroke-linejoin="round"/><path d="M1.5 4.5H14.5V14.5H1.5Z" fill="url(#gFo)" stroke="#9a7a22" stroke-linejoin="round"/><path d="M8 6.4L5.2 9.6H7.1V11.6H8.9V9.6H10.8Z" fill="#222"/><path d="M5.2 12.4H10.8" stroke="#222" stroke-width="1.1"/></svg>
<svg class="b" style="left:71px;top:156.5px" width="18" height="17" viewBox="0 0 18 17"><g transform="translate(1 -0.5)"><path d="M3.5 1.5H8L9.5 3H16.5V12H3.5Z" fill="#caa24e" stroke="#8a6c22" stroke-linejoin="round"/><path d="M1.5 4.5H14.5V14.5H1.5Z" fill="url(#gFo)" stroke="#9a7a22" stroke-linejoin="round"/></g><path d="M3.6 15.8C1.6 15.8 0.6 14.6 0.6 13.2C0.6 11.8 1.8 10.8 3.2 10.9C3.8 9.2 5.2 8.4 6.8 8.4C8.6 8.4 10 9.6 10.4 11.2C11.8 11.2 12.8 12.2 12.8 13.5C12.8 14.8 11.8 15.8 10.4 15.8Z" fill="#0c4c8c"/><path d="M5 12.6L7.4 10.4V11.8H9V13.4H7.4V14.8Z" fill="#fff"/></svg>
<svg class="b" style="left:94px;top:156.5px" width="18" height="17" viewBox="0 0 18 17"><g transform="translate(1 -0.5)"><path d="M3.5 1.5H8L9.5 3H16.5V12H3.5Z" fill="#b8904a" stroke="#8a6c22" stroke-linejoin="round"/><path d="M1.5 4.5H14.5V14.5H1.5Z" fill="#e6cc90" stroke="#8a6a2a" stroke-linejoin="round"/></g><path d="M11.5 5.8C7.5 5.2 4.6 7.4 4.8 11H2.2L6 15.6L9.8 11H7.4C7.4 8.8 9 7.6 11.5 8.2Z" fill="url(#gGr)" stroke="#3f8a1c" stroke-width="0.8" stroke-linejoin="round"/></svg>
<svg class="b" style="left:1345px;top:158px" width="14" height="13" viewBox="0 0 14 13"><circle cx="9" cy="5" r="3.3" fill="#f4f8fd" stroke="#4a80c4" stroke-width="1.5"/><path d="M6.6 7.4L2 11.6" stroke="#3a5fa4" stroke-width="2" stroke-linecap="round"/></svg>
<svg class="b" style="left:323px;top:179px" width="14" height="14" viewBox="0 0 14 14"><circle cx="7" cy="7" r="5.5" fill="none" stroke="#555" stroke-width="1"/><path d="M4 5.2H10L7 9.8Z" fill="#555"/></svg>
<svg class="b" style="left:323px;top:479px" width="14" height="14" viewBox="0 0 14 14"><circle cx="7" cy="7" r="5.5" fill="none" stroke="#555" stroke-width="1"/><path d="M4 5.2H10L7 9.8Z" fill="#555"/></svg>
<svg class="b" style="left:1326px;top:180px" width="14" height="14" viewBox="0 0 14 14"><circle cx="7" cy="7" r="5.5" fill="none" stroke="#555" stroke-width="1"/><path d="M4 5.2H10L7 9.8Z" fill="#555"/></svg>
<svg class="b" style="left:1345px;top:204px" width="14" height="14" viewBox="0 0 14 14"><circle cx="7" cy="7" r="5.5" fill="none" stroke="#fff" stroke-width="1"/><path d="M4 5.2H10L7 9.8Z" fill="#fff"/></svg>
<svg class="b" style="left:1347px;top:182px" width="11" height="11" viewBox="0 0 11 11"><path d="M1.5 1.5L9 9M9 1.5L1.5 9" stroke="#000" stroke-width="1.7" fill="none"/></svg>
<svg class="b" style="left:351px;top:178px" width="19" height="18" viewBox="0 0 19 18"><rect x="1.5" y="4.5" width="13" height="12" fill="url(#gPg)" stroke="#555"/><path d="M3.5 7H9" stroke="#777" stroke-width="1"/><path d="M15.6 1.2L18 3.6L7 14.6L3.6 15.8L4.6 12.2Z" fill="#f0a83c" stroke="#8a5a20" stroke-width="0.8" stroke-linejoin="round"/><path d="M15.6 1.2L18 3.6L16.6 5L14.2 2.6Z" fill="#e05070"/><path d="M3.6 15.8L4.6 12.2L7 14.6Z" fill="#333"/></svg>
<div class="b" style="left:1361px;top:724px;width:2px;height:2px;background:#a8a8a8;"></div>
<span class="t" style="left:1075px;top:652px;color:rgba(125,125,125,0.5);font-size:19px;letter-spacing:0.316px;">Activate Windows</span>
<span class="t" style="left:1075px;top:675px;color:rgba(125,125,125,0.5);font-size:14px;letter-spacing:0.372px;">Go to Settings to activate Windows.</span>
</body></html>
